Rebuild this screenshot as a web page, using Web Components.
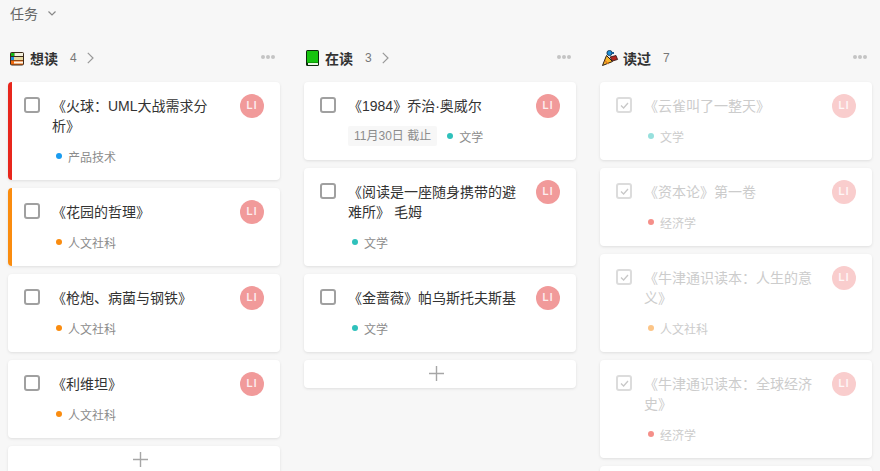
<!DOCTYPE html>
<html lang="zh-CN">
<head>
<meta charset="utf-8">
<title>任务</title>
<style>
html, body {
    margin: 0;
    height: 471px;
    overflow: hidden;
    background: #f7f7f7;
    font-family: "Liberation Sans", "Noto Sans CJK SC", sans-serif;
}
</style>
</head>
<body>
<task-board>
    <board-column name="想读" count="4" arrow add icon="shelf">
        <task-card title="《火球：UML大战需求分析》" tag="产品技术" tag-color="#1a9cf0" bar="#e8261c"></task-card>
        <task-card title="《花园的哲理》" tag="人文社科" tag-color="#fa8c0f" bar="#fa8c0f"></task-card>
        <task-card title="《枪炮、病菌与钢铁》" tag="人文社科" tag-color="#fa8c0f"></task-card>
        <task-card title="《利维坦》" tag="人文社科" tag-color="#fa8c0f"></task-card>
    </board-column>
    <board-column name="在读" count="3" arrow add icon="book">
        <task-card title="《1984》乔治·奥威尔" tag="文学" tag-color="#2fc1bb" due="11月30日 截止"></task-card>
        <task-card title="《阅读是一座随身携带的避难所》 毛姆" tag="文学" tag-color="#2fc1bb"></task-card>
        <task-card title="《金蔷薇》帕乌斯托夫斯基" tag="文学" tag-color="#2fc1bb"></task-card>
    </board-column>
    <board-column name="读过" count="7" icon="party">
        <task-card done title="《云雀叫了一整天》" tag="文学" tag-color="#2fc1bb"></task-card>
        <task-card done title="《资本论》第一卷" tag="经济学" tag-color="#ec1f14"></task-card>
        <task-card done title="《牛津通识读本：人生的意义》" tag="人文社科" tag-color="#fa8c0f"></task-card>
        <task-card done title="《牛津通识读本：全球经济史》" tag="经济学" tag-color="#ec1f14"></task-card>
        <task-card done blank></task-card>
    </board-column>
</task-board>

<script>
const icons = {
    shelf: `<svg width="22" height="16" viewBox="0 0 22 16">
        <rect x="2" y="2" width="14" height="13.5" rx="2" fill="#3b2a1c"/>
        <rect x="3" y="3" width="3.5" height="3" fill="#14b814"/><rect x="6.5" y="3" width="8.5" height="3" fill="#f4f0dc"/>
        <rect x="3" y="7" width="3" height="3" fill="#1c8fe0"/><rect x="6" y="7" width="9" height="3" fill="#e8d9a0"/>
        <rect x="3" y="10.5" width="12" height="4" fill="#ee6a10"/><rect x="6" y="11.5" width="9" height="2" fill="#fbf6ea"/>
    </svg>`,
    book: `<svg width="21" height="16" viewBox="0 0 21 16">
        <rect x="2" y="0" width="13" height="16" rx="1.5" fill="#0c2a0c"/>
        <rect x="3" y="1" width="11" height="11" fill="#16c40f"/>
        <rect x="3" y="12" width="11" height="1" fill="#0f9c0a"/>
        <rect x="4" y="13" width="10" height="2" fill="#e9f5e4"/>
    </svg>`,
    party: `<svg width="23" height="16" viewBox="0 0 23 16">
        <path d="M2.5 15.5 6.5 5.5 12.5 11.5Z" fill="#f9b62b" stroke="#2a1c10" stroke-width="1"/>
        <path d="M4.8 10.5 8.4 14" stroke="#e0781e" stroke-width="1.2"/>
        <circle cx="9.5" cy="3" r="2.6" fill="#1f8fd8" stroke="#10283c" stroke-width=".8"/>
        <path d="M10 7 16 5.5 17.6 9.5 12.5 11Z" fill="#b3261e" stroke="#2a1010" stroke-width=".8"/>
        <rect x="12" y="2" width="2" height="2" fill="#1b5c94"/>
    </svg>`
};

const taskBoardTemplate = document.createElement('template');
taskBoardTemplate.innerHTML = `
<style>
:host {
    display: block;
    color: #333;
}
.title {
    display: flex;
    align-items: center;
    gap: 10px;
    box-sizing: border-box;
    height: 28px;
    padding: 0 0 2px 10px;
    font-size: 14px;
    color: #666;
}
.columns {
    display: flex;
    gap: 24px;
    padding: 16px 0 0 8px;
}
</style>
<div class="title">
    <span>任务</span>
    <svg width="8" height="5" viewBox="0 0 8 5" fill="none" stroke="#888" stroke-width="1.2"><path d="M.5.5 4 4 7.5.5"/></svg>
</div>
<div class="columns"><slot></slot></div>
`;

class TaskBoard extends HTMLElement {
    constructor() {
        super();
        this.attachShadow({mode: 'open'});
        this.shadowRoot.appendChild(taskBoardTemplate.content.cloneNode(true));
    }
}

const boardColumnTemplate = document.createElement('template');
boardColumnTemplate.innerHTML = `
<style>
:host {
    display: block;
    flex: 0 0 272px;
    width: 272px;
}
.head {
    display: flex;
    align-items: center;
    height: 28px;
    margin-bottom: 10px;
    font-size: 14px;
}
.icon {
    display: flex;
}
.name {
    font-weight: 700;
    color: #333;
}
.count {
    margin-left: 12px;
    font-size: 12px;
    color: #777;
}
.arrow {
    margin-left: 10px;
}
.more {
    display: flex;
    gap: 1px;
    margin-left: auto;
    margin-right: 5px;
    margin-bottom: 2px;
}
.more i {
    width: 4px;
    height: 4px;
    border-radius: 50%;
    background: #c4c4c4;
}
.cards {
    display: flex;
    flex-direction: column;
    gap: 8px;
}
.add {
    display: flex;
    align-items: center;
    justify-content: center;
    box-sizing: border-box;
    height: 28px;
    padding: 0 8px 2px 0;
    margin-top: 8px;
    background: #fff;
    border-radius: 4px;
    box-shadow: 0 1px 3px rgba(0,0,0,.1);
}
.add[hidden] { display: none; }
</style>
<div class="head">
    <span class="icon"></span>
    <span class="name"></span>
    <span class="count"></span>
    <svg class="arrow" width="7" height="12" viewBox="0 0 7 12" fill="none" stroke="#999" stroke-width="1.2"><path d="M.8.8 6 6 .8 11.2"/></svg>
    <span class="more"><i></i><i></i><i></i></span>
</div>
<div class="cards"><slot></slot></div>
<div class="add">
    <svg width="15" height="15" viewBox="0 0 15 15" stroke="#a6a6a6" stroke-width="1.4"><path d="M7.5 0V15M0 7.5H15"/></svg>
</div>
`;

class BoardColumn extends HTMLElement {
    constructor() {
        super();
        this.attachShadow({mode: 'open'});
        this.shadowRoot.appendChild(boardColumnTemplate.content.cloneNode(true));
    }

    connectedCallback() {
        const root = this.shadowRoot;
        root.querySelector('.icon').innerHTML = icons[this.getAttribute('icon')];
        root.querySelector('.name').textContent = this.getAttribute('name');
        root.querySelector('.count').textContent = this.getAttribute('count');
        if (!this.hasAttribute('arrow')) root.querySelector('.arrow').style.display = 'none';
        root.querySelector('.add').hidden = !this.hasAttribute('add');
    }
}

const taskCardTemplate = document.createElement('template');
taskCardTemplate.innerHTML = `
<style>
:host {
    display: block;
    background: #fff;
    border-radius: 4px;
    box-shadow: 0 1px 3px rgba(0,0,0,.1);
    overflow: hidden;
}
.wrap {
    position: relative;
}
.card {
    display: flex;
    align-items: flex-start;
    min-height: 78px;
    box-sizing: border-box;
    padding: 14px 16px;
}
.check {
    flex: none;
    width: 16px;
    height: 16px;
    box-sizing: border-box;
    border: 2px solid #a0a0a0;
    border-radius: 3px;
    margin-top: 1px;
    margin-right: 12px;
}
.check svg {
    display: none;
    margin: -.5px;
}
.body {
    flex: none;
    width: 169px;
}
.title {
    font-size: 14px;
    line-height: 20px;
    color: #333;
}
.meta {
    display: flex;
    align-items: center;
    margin-top: 10px;
    height: 20px;
    font-size: 12px;
    color: #8c8c8c;
}
.due {
    padding: 0 6px;
    margin-right: 6px;
    line-height: 20px;
    background: #f7f7f7;
    border-radius: 2px;
    white-space: nowrap;
}
.dot {
    flex: none;
    width: 6px;
    height: 6px;
    border-radius: 50%;
    margin: 0 6px 0 4px;
}
.avatar {
    flex: none;
    width: 24px;
    height: 24px;
    margin: -2px 0 0 auto;
    border-radius: 50%;
    background: #f19a9a;
    color: rgba(255,255,255,.85);
    font-size: 10px;
    font-weight: 700;
    line-height: 24px;
    text-align: center;
    letter-spacing: 1px;
}
.bar {
    position: absolute;
    left: 0;
    top: 0;
    bottom: 0;
    width: 4px;
}
:host([done]) .title,
:host([done]) .meta { color: #ccc; }
:host([done]) .dot { opacity: .5; }
:host([done]) .avatar { background: #f9cdcd; }
:host([done]) .check { border-color: #dcdcdc; }
:host([done]) .check svg { display: block; }
:host([blank]) .card > * { visibility: hidden; }
</style>
<div class="wrap">
    <div class="bar"></div>
    <div class="card">
        <div class="check"><svg width="13" height="13" viewBox="0 0 13 13" fill="none" stroke="#c8c8c8" stroke-width="1.3"><path d="M3 6.5 5.6 9 10 4"/></svg></div>
        <div class="body">
            <div class="title"></div>
            <div class="meta"><span class="due"></span><span class="dot"></span><span class="tag"></span></div>
        </div>
        <div class="avatar">LI</div>
    </div>
</div>
`;

class TaskCard extends HTMLElement {
    constructor() {
        super();
        this.attachShadow({mode: 'open'});
        this.shadowRoot.appendChild(taskCardTemplate.content.cloneNode(true));
    }

    connectedCallback() {
        const root = this.shadowRoot;
        root.querySelector('.title').textContent = this.getAttribute('title');
        root.querySelector('.tag').textContent = this.getAttribute('tag');
        root.querySelector('.dot').style.background = this.getAttribute('tag-color');
        const due = root.querySelector('.due');
        if (this.hasAttribute('due')) due.textContent = this.getAttribute('due');
        else due.style.display = 'none';
        if (this.hasAttribute('bar')) root.querySelector('.bar').style.background = this.getAttribute('bar');
    }
}

window.customElements.define('task-board', TaskBoard);
window.customElements.define('board-column', BoardColumn);
window.customElements.define('task-card', TaskCard);
</script>
</body>
</html>
